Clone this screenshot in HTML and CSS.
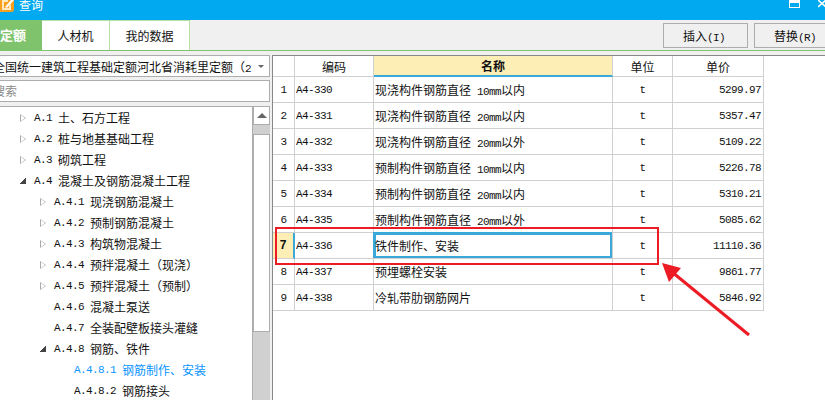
FILE: index.html

```html
<!DOCTYPE html>
<html lang="zh-CN">
<head>
  <meta charset="UTF-8">
  <title>查询</title>
  <link rel="stylesheet" href="styles.css">
</head>
<body>
  <div class="window">
    <div class="titlebar">
      <svg class="app-icon" width="14" height="12" viewBox="0 0 14 12">
        <path d="M0 0h14v9a3 3 0 0 1-3 3H0z" fill="#f7a020"/>
        <path d="M2 0h6v2H4v6h5V6l2-2v6H2z" fill="#ffe9bd"/>
        <path d="M5 7l6-7h3L7 8z" fill="#fff"/>
      </svg>
      <span class="title-text">查询</span>
      <div class="win-btns">
        <svg width="11" height="8" viewBox="0 0 11 8"><path d="M0 0h11v8H0z" fill="#fff"/><path d="M1 3h9v4H1z" fill="#00a9f0"/></svg>
        <svg class="win-close" width="8" height="8" viewBox="0 0 8 8"><path d="M0 0l8 7M0 7l8-7" stroke="#fff" stroke-width="1.6" fill="none"/></svg>
      </div>
    </div>

    <div class="toolbar">
      <div class="tab tab-active">定额</div>
      <div class="tab tab-rc">人材机</div>
      <div class="tab tab-my">我的数据</div>
      <div class="spacer"></div>
      <button class="btn">插入<span class="m">(I)</span></button>
      <button class="btn">替换<span class="m">(R)</span></button>
    </div>

    <div class="main">
      <div class="left">
        <div class="combo">
          <span class="combo-text">全国统一建筑工程基础定额河北省消耗里定额（<span class="m">2</span></span>
          <span class="combo-arrow"></span>
        </div>
        <div class="search">搜索</div>
        <div class="tree">
          <div class="tree-list">
            <div class="node l1"><i class="tri"></i><span class="m">A.1 </span>土、石方工程</div>
            <div class="node l1"><i class="tri"></i><span class="m">A.2 </span>桩与地基基础工程</div>
            <div class="node l1"><i class="tri"></i><span class="m">A.3 </span>砌筑工程</div>
            <div class="node l1"><i class="tri open"></i><span class="m">A.4 </span>混凝土及钢筋混凝土工程</div>
            <div class="node l2"><i class="tri"></i><span class="m">A.4.1 </span>现浇钢筋混凝土</div>
            <div class="node l2"><i class="tri"></i><span class="m">A.4.2 </span>预制钢筋混凝土</div>
            <div class="node l2"><i class="tri"></i><span class="m">A.4.3 </span>构筑物混凝土</div>
            <div class="node l2"><i class="tri"></i><span class="m">A.4.4 </span>预拌混凝土（现浇）</div>
            <div class="node l2"><i class="tri"></i><span class="m">A.4.5 </span>预拌混凝土（预制）</div>
            <div class="node l2"><i class="tri none"></i><span class="m">A.4.6 </span>混凝土泵送</div>
            <div class="node l2"><i class="tri none"></i><span class="m">A.4.7 </span>全装配壁板接头灌缝</div>
            <div class="node l2"><i class="tri open"></i><span class="m">A.4.8 </span>钢筋、铁件</div>
            <div class="node l3 current"><span class="m">A.4.8.1 </span>钢筋制作、安装</div>
            <div class="node l3"><span class="m">A.4.8.2 </span>钢筋接头</div>
          </div>
          <div class="scrollbar">
            <div class="sb-up"><i></i></div>
            <div class="sb-gap"></div>
            <div class="sb-thumb"></div>
          </div>
        </div>
      </div>

      <div class="right">
        <table class="grid">
          <colgroup>
            <col class="c-no"><col class="c-code"><col class="c-name"><col class="c-unit"><col class="c-price">
          </colgroup>
          <thead>
            <tr><th></th><th>编码</th><th class="th-sel">名称</th><th>单位</th><th>单价</th></tr>
          </thead>
          <tbody>
            <tr><td class="no m">1</td><td class="m">A4-330</td><td>现浇构件钢筋直径<span class="m"> 10mm</span>以内</td><td class="unit m">t</td><td class="price m">5299.97</td></tr>
            <tr><td class="no m">2</td><td class="m">A4-331</td><td>现浇构件钢筋直径<span class="m"> 20mm</span>以内</td><td class="unit m">t</td><td class="price m">5357.47</td></tr>
            <tr><td class="no m">3</td><td class="m">A4-332</td><td>现浇构件钢筋直径<span class="m"> 20mm</span>以外</td><td class="unit m">t</td><td class="price m">5109.22</td></tr>
            <tr><td class="no m">4</td><td class="m">A4-333</td><td>预制构件钢筋直径<span class="m"> 10mm</span>以内</td><td class="unit m">t</td><td class="price m">5226.78</td></tr>
            <tr><td class="no m">5</td><td class="m">A4-334</td><td>预制构件钢筋直径<span class="m"> 20mm</span>以内</td><td class="unit m">t</td><td class="price m">5310.21</td></tr>
            <tr><td class="no m">6</td><td class="m">A4-335</td><td>预制构件钢筋直径<span class="m"> 20mm</span>以外</td><td class="unit m">t</td><td class="price m">5085.62</td></tr>
            <tr><td class="no no-sel m">7</td><td class="m">A4-336</td><td class="cell-sel">铁件制作、安装</td><td class="unit m">t</td><td class="price m">11110.36</td></tr>
            <tr><td class="no m">8</td><td class="m">A4-337</td><td>预埋螺栓安装</td><td class="unit m">t</td><td class="price m">9861.77</td></tr>
            <tr><td class="no m">9</td><td class="m">A4-338</td><td>冷轧带肋钢筋网片</td><td class="unit m">t</td><td class="price m">5846.92</td></tr>
          </tbody>
        </table>
      </div>
    </div>

    <!-- red annotation drawn over the screenshot -->
    <svg class="annotation" width="825" height="400" viewBox="0 0 825 400">
      <rect x="276" y="228" width="382" height="36" fill="none" stroke="#ed1c24" stroke-width="2"/>
      <path d="M749 335L672 272" stroke="#ed1c24" stroke-width="3" fill="none"/>
      <path d="M662 263L681 268L669 282z" fill="#ed1c24"/>
    </svg>
  </div>
</body>
</html>
```

FILE: styles.css

```css
* { box-sizing: border-box; }
html, body { margin: 0; padding: 0; }
body { font-family: "Noto Sans CJK SC", sans-serif; font-size: 12px; color: #111; background: #fff; }

.window { position: relative; width: 825px; height: 400px; overflow: hidden; }
.m { font-family: "Liberation Mono", monospace; font-size: 11px; letter-spacing: -0.6px; white-space: pre; }

.titlebar { display: flex; align-items: flex-start; height: 20px; background: #00a9f0; color: #fff; }
.app-icon { display: block; flex: none; }
.title-text { margin-left: 5px; margin-top: -4px; line-height: 17px; }
.win-btns { display: flex; margin-left: auto; margin-right: -1px; gap: 18px; }
.win-btns svg { display: block; flex: none; }

.toolbar { display: flex; align-items: flex-start; height: 31px; background: #f0f0f0; border-bottom: 1px solid #7fc46d; }
.tab { height: 30px; line-height: 30px; text-align: center; background: #fff; border-right: 1px solid #b5e0a8; border-top: 1px solid #b5e0a8; }
.tab-active { width: 42px; background: #7fc46d; color: #fff; font-weight: bold; font-size: 13px; text-align: left; border: 0; }
.tab-rc { width: 68px; }
.tab-my { width: 80px; }
.spacer { flex: 1; }
.btn { width: 85px; height: 25px; margin-top: 3px; margin-left: 6px; padding: 0 3px 0 0; font: inherit; color: #111; background: #f0f0f0; border: 1px solid #adadad; flex: none; }
.btn:last-child { margin-right: -14px; }

.main { display: flex; height: 349px; background: #f0f0f0; }

.left { width: 272px; flex: none; padding-top: 4px; }
.combo { display: flex; align-items: center; width: 270px; height: 22px; border: 1px solid #adadad; border-left: 0; background: #fff; overflow: hidden; }
.combo-text { margin-left: -7px; white-space: nowrap; overflow: hidden; flex: 1; }
.combo-arrow { width: 0; height: 0; margin: 0 5px 0 4px; border: 3px solid transparent; border-top: 3px solid #666; border-bottom: 0; flex: none; }
.search { width: 270px; height: 22px; margin-top: 3px; line-height: 20px; text-indent: -7px; overflow: hidden; color: #8a8a8a; background: #fff; border: 1px solid #adadad; border-left: 0; }

.tree { display: flex; width: 270px; height: 300px; margin-top: 4px; border-top: 1px solid #adadad; background: #fff; overflow: hidden; }
.tree-list { flex: 1; }
.node { display: flex; align-items: center; height: 21px; white-space: pre; }
.l1 { padding-left: 20px; }
.l2 { padding-left: 40px; }
.l3 { padding-left: 74px; }
.current { color: #0a94ff; }

/* collapsed: grey outline triangle, white triangle laid over it */
.tri { position: relative; width: 0; height: 0; margin-right: 8px; flex: none; border-left: 6px solid #aaa; border-top: 4px solid transparent; border-bottom: 4px solid transparent; }
.tri::after { content: ""; position: absolute; left: -5px; top: -3px; border-left: 4px solid #fff; border-top: 3px solid transparent; border-bottom: 3px solid transparent; }
.tri.open { width: 7px; height: 6px; margin-left: -1px; border: 0; background: linear-gradient(135deg, transparent 50%, #444 50%); }
.tri.open::after { display: none; }
.tri.none { visibility: hidden; }

.scrollbar { width: 18px; flex: none; background: #d0d0d0; border-left: 1px solid #adadad; }
.sb-up { display: flex; align-items: center; justify-content: center; height: 18px; background: #fff; border: 1px solid #adadad; border-top: 0; }
.sb-up i { width: 0; height: 0; border: 5px solid transparent; border-bottom: 5px solid #666; border-top: 0; }
.sb-gap { height: 9px; }
.sb-thumb { height: 198px; background: #fff; border: 1px solid #adadad; }

.right { flex: 1; margin-top: 4px; background: #fff; border-left: 1px solid #888; border-top: 1px solid #888; }
.grid { border-collapse: separate; border-spacing: 0; table-layout: fixed; width: 491px; background: #fff; }
.c-no { width: 22px; }
.c-code { width: 79px; }
.c-name { width: 239px; }
.c-unit { width: 60px; }
.c-price { width: 91px; }
.grid th, .grid td { padding: 0; height: 26px; border-right: 1px solid #d0d0d0; border-bottom: 1px solid #d0d0d0; font-weight: normal; white-space: nowrap; overflow: hidden; }
.grid th { height: 21px; text-align: center; }
.grid td { padding-left: 1px; }
.grid .th-sel { font-weight: bold; background: #fdeeb5; border-bottom: 2px solid #3aa9d9; }
.grid .no { text-align: center; padding: 0; }
.grid .unit { text-align: center; padding: 0; }
.grid .price { text-align: right; padding: 0 2px 0 0; }
.grid .no-sel { background: #fdeeb5; font-weight: bold; font-size: 12px; letter-spacing: 0; border-right: 2px solid #3aa9d9; }
.grid .cell-sel { box-shadow: inset 0 0 0 2px #3aa9d9, -1px -1px 0 #3aa9d9; overflow: visible; }

.annotation { position: absolute; left: 0; top: 0; pointer-events: none; }
```
